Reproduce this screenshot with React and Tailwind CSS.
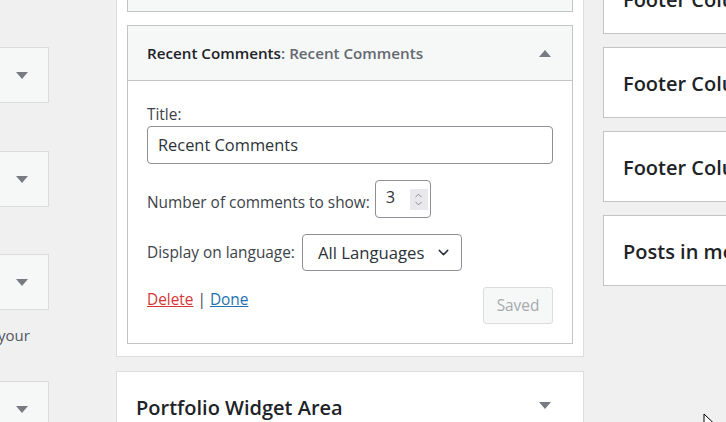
import { ChevronDown, ChevronUp } from 'lucide-react'

const FONT = { fontFamily: '"Open Sans", "Noto Sans", sans-serif' }

function Tri({ up }) {
  return (
    <span
      className={`block w-0 h-0 border-l-[6px] border-r-[6px] border-l-transparent border-r-transparent ${
        up ? 'border-b-[7px] border-b-[#787c82]' : 'border-t-[7px] border-t-[#787c82]'
      }`}
    />
  )
}

function LeftBox({ className = '' }) {
  return (
    <div className={`shrink-0 h-[56px] w-[50px] -ml-px bg-[#f6f7f7] border border-[#dcdcde] flex items-center justify-end pr-[20px] ${className}`}>
      <Tri />
    </div>
  )
}

function RightBox({ title, className = '' }) {
  return (
    <div className={`shrink-0 h-[71px] w-[140px] bg-white border border-[#c3c4c7] flex items-center pl-[19px] pt-[3px] whitespace-nowrap overflow-hidden ${className}`}>
      <span className="text-[20px] font-semibold text-[#1d2327]">{title}</span>
    </div>
  )
}

export default function App() {
  return (
    <div style={FONT} className="relative w-[726px] h-[422px] overflow-hidden bg-[#f0f0f1] flex">
      {/* left column */}
      <div className="w-[50px] shrink-0 flex flex-col">
        <LeftBox className="mt-[47px]" />
        <LeftBox className="mt-[48px]" />
        <LeftBox className="mt-[47px]" />
        <p className="shrink-0 mt-[15px] text-[15px] leading-[20px] text-[#50575e] -ml-[2px] whitespace-nowrap">your</p>
        <LeftBox className="mt-[36px]" />
      </div>

      {/* middle column */}
      <div className="ml-[66px] w-[468px] shrink-0 flex flex-col">
        <div className="shrink-0 -mt-[40px] bg-white border border-[#dcdcde] px-[10px] pt-[10px] pb-[12px]">
          <div className="h-[41px] bg-[#f6f7f7] border border-[#c3c4c7]" />

          <div className="mt-[13px] border border-[#c3c4c7] bg-white">
            <div className="h-[55px] bg-[#f6f7f7] border-b border-[#c3c4c7] flex items-center justify-between pl-[19px] pr-[21px]">
              <h3 className="text-[15.2px] font-semibold text-[#1d2327] whitespace-nowrap">
                Recent Comments<span className="text-[#646970]">: Recent Comments</span>
              </h3>
              <Tri up />
            </div>

            <div className="px-[19px] pt-[24px] pb-[19px] text-[15.4px] text-[#3c434a]">
              <label className="block leading-[20px]">Title:</label>
              <div className="mt-[1px] h-[38px] border border-[#8c8f94] rounded-[4px] flex items-center px-[10px] text-[16.4px] text-[#2c3338]">
                Recent Comments
              </div>

              <div className="mt-[16px] flex items-center gap-[5px]">
                <span className="mt-[8px] whitespace-nowrap">Number of comments to show:</span>
                <div className="h-[38px] w-[56px] border border-[#8c8f94] rounded-[4px] flex items-center justify-between pl-[10px] pr-[2px] text-[16.4px] text-[#2c3338]">
                  <span className="-mt-[4px]">3</span>
                  <span className="h-[21px] w-[18px] bg-[#e9e9ed] flex flex-col items-center justify-center text-[#7e8288]">
                    <ChevronUp size={11} strokeWidth={2} />
                    <ChevronDown size={11} strokeWidth={2} className="-mt-[3px]" />
                  </span>
                </div>
              </div>

              <div className="mt-[16px] flex items-center gap-[7px]">
                <span className="whitespace-nowrap">Display on language:</span>
                <div className="h-[37px] w-[160px] border border-[#8c8f94] rounded-[4px] flex items-center justify-between pl-[15px] pr-[9px] text-[16.7px] text-[#2c3338] whitespace-nowrap">
                  All Languages
                  <ChevronDown size={17} strokeWidth={2} className="text-[#2c3338]" />
                </div>
              </div>

              <div className="mt-[17px] flex justify-between items-start">
                <div className="mt-[2px] leading-[20px]">
                  <a className="text-[#d63638] underline">Delete</a>
                  <span className="text-[#3c434a]"> | </span>
                  <a className="text-[#2271b1] underline">Done</a>
                </div>
                <button className="-mt-[1px] h-[37px] w-[70px] rounded-[3px] bg-[#f6f7f7] border border-[#dcdcde] text-[#a7aaad] text-[15.4px]">
                  Saved
                </button>
              </div>
            </div>
          </div>
        </div>

        <div className="shrink-0 mt-[14px] h-[80px] bg-white border border-[#dcdcde] flex items-start justify-between pl-[19px] pr-[32px] pt-[21px]">
          <h2 className="text-[20px] font-semibold text-[#1d2327]">Portfolio Widget Area</h2>
          <span className="mt-[9px]"><Tri /></span>
        </div>
      </div>

      {/* right column */}
      <div className="ml-[19px] shrink-0 flex flex-col">
        <RightBox title="Footer Column" className="-mt-[37px]" />
        <RightBox title="Footer Column" className="mt-[13px]" />
        <RightBox title="Footer Column" className="mt-[13px]" />
        <RightBox title="Posts in menu" className="mt-[13px]" />
      </div>

      {/* cursor */}
      <svg className="absolute left-[703px] top-[413px]" width="12" height="18" viewBox="0 0 12 18">
        <path d="M1 1 L1 15 L4.5 11.5 L7 17 L9 16 L6.5 10.5 L11 10.5 Z" fill="white" stroke="black" strokeWidth="1" />
      </svg>
    </div>
  )
}
